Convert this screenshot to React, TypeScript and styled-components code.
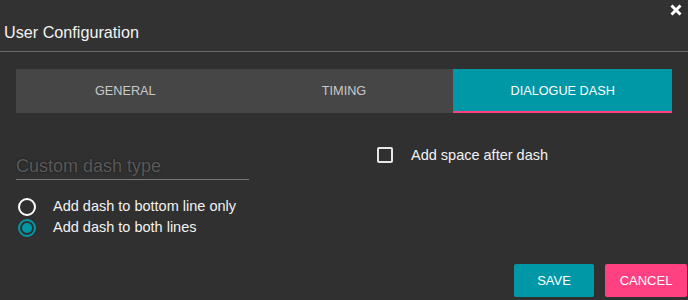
import React, { useState } from 'react';
import styled, { createGlobalStyle } from 'styled-components';

const GlobalStyle = createGlobalStyle`
  html, body {
    margin: 0;
    padding: 0;
    background: #303030;
  }
  * {
    box-sizing: border-box;
  }
`;

const teal = '#0097a7';
const pink = '#ff4081';

// Dialog shell
const Dialog = styled.div`
  width: 688px;
  height: 300px;
  display: flex;
  flex-direction: column;
  background: #303030;
  font-family: 'Liberation Sans', Arial, sans-serif;
  color: #eeeeee;
  overflow: hidden;
`;

const Header = styled.div`
  height: 52px;
  display: flex;
  justify-content: space-between;
  align-items: flex-start;
  border-bottom: 1px solid #6a6a6a;
  background: #323232;
`;

const Title = styled.h2`
  margin: 0;
  padding: 22px 0 0 4px;
  font-size: 16.2px;
  line-height: 20px;
  font-weight: normal;
  color: #f2f2f2;
`;

const CloseButton = styled.button`
  margin: 4px 6px 0 0;
  padding: 0;
  width: 12px;
  height: 12px;
  border: none;
  background: transparent;
  cursor: pointer;
  display: flex;
`;

// Tabs
const TabBar = styled.div`
  margin: 17px 16px 0;
  height: 44px;
  display: grid;
  grid-template-columns: repeat(3, 1fr);
  background: #464646;
`;

const Tab = styled.button<{ $active?: boolean }>`
  border: none;
  border-bottom: 2px solid ${(p) => (p.$active ? pink : 'transparent')};
  padding: 2px 0 0;
  background: ${(p) => (p.$active ? teal : 'transparent')};
  color: ${(p) => (p.$active ? '#ffffff' : '#c9c9c9')};
  font-family: inherit;
  font-size: 12.7px;
  text-transform: uppercase;
  cursor: pointer;
`;

// Body
const Body = styled.div`
  margin-top: 34px;
  padding: 0 16px;
  display: grid;
  grid-template-columns: 1fr 1fr;
`;

const Column = styled.div<{ $indent?: number }>`
  display: flex;
  flex-direction: column;
  padding-left: ${(p) => p.$indent ?? 0}px;
`;

const Field = styled.div`
  width: 233px;
  padding-top: 7px;
  border-bottom: 1px solid #777777;
`;

const TextInput = styled.input`
  display: block;
  width: 100%;
  height: 25px;
  padding: 0;
  border: none;
  outline: none;
  background: transparent;
  font-family: inherit;
  font-size: 18px;
  color: #eeeeee;

  &::placeholder {
    color: #5a5a5a;
    text-shadow: 0 0 2px rgba(0, 0, 0, 0.6);
  }
`;

const RadioGroup = styled.div`
  margin-top: 16px;
  display: flex;
  flex-direction: column;
`;

const OptionRow = styled.label<{ $gap: number }>`
  display: flex;
  align-items: center;
  gap: ${(p) => p.$gap}px;
  height: 21px;
  font-size: 14.5px;
  line-height: 20px;
  color: #f2f2f2;
  cursor: pointer;
`;

const OptionText = styled.span`
  margin-top: -1px;
`;

const RadioCircle = styled.span<{ $checked?: boolean }>`
  margin-left: 2px;
  width: 18px;
  height: 18px;
  border-radius: 50%;
  border: 2px solid ${(p) => (p.$checked ? teal : '#ffffff')};
  display: flex;
  align-items: center;
  justify-content: center;

  &::after {
    content: '';
    width: 10px;
    height: 10px;
    border-radius: 50%;
    background: ${(p) => (p.$checked ? teal : 'transparent')};
  }
`;

const CheckBox = styled.span`
  width: 16px;
  height: 16px;
  border: 2px solid #e6e6e6;
  border-radius: 2px;
`;

const CheckRow = styled(OptionRow)`
  height: 16px;
`;

// Footer
const Footer = styled.div`
  margin-top: auto;
  padding: 0 1px 3px 0;
  display: flex;
  justify-content: flex-end;
  gap: 11px;
`;

const ActionButton = styled.button<{ $color: string; $width: number }>`
  width: ${(p) => p.$width}px;
  height: 33px;
  border: none;
  border-radius: 2px;
  background: ${(p) => p.$color};
  color: #ffffff;
  font-family: inherit;
  font-size: 13px;
  text-transform: uppercase;
  cursor: pointer;
`;

const tabs = ['General', 'Timing', 'Dialogue dash'];

export default function App() {
  const [activeTab, setActiveTab] = useState(2);
  const [mode, setMode] = useState('both');

  return (
    <>
      <GlobalStyle />
      <Dialog>
        <Header>
          <Title>User Configuration</Title>
          <CloseButton aria-label="close">
            <svg width="12" height="12" viewBox="0 0 12 12">
              <path d="M1.5 1.5 L10.5 10.5 M10.5 1.5 L1.5 10.5" stroke="#ffffff" strokeWidth="3" />
            </svg>
          </CloseButton>
        </Header>

        <TabBar>
          {tabs.map((t, i) => (
            <Tab key={t} $active={i === activeTab} onClick={() => setActiveTab(i)}>
              {t}
            </Tab>
          ))}
        </TabBar>

        <Body>
          <Column>
            <Field>
              <TextInput placeholder="Custom dash type" />
            </Field>
            <RadioGroup>
              <OptionRow $gap={17} onClick={() => setMode('bottom')}>
                <RadioCircle $checked={mode === 'bottom'} />
                <OptionText>Add dash to bottom line only</OptionText>
              </OptionRow>
              <OptionRow $gap={17} onClick={() => setMode('both')}>
                <RadioCircle $checked={mode === 'both'} />
                <OptionText>Add dash to both lines</OptionText>
              </OptionRow>
            </RadioGroup>
          </Column>
          <Column $indent={33}>
            <CheckRow $gap={18}>
              <CheckBox />
              <OptionText>Add space after dash</OptionText>
            </CheckRow>
          </Column>
        </Body>

        <Footer>
          <ActionButton $color={teal} $width={80}>Save</ActionButton>
          <ActionButton $color={pink} $width={82}>Cancel</ActionButton>
        </Footer>
      </Dialog>
    </>
  );
}
